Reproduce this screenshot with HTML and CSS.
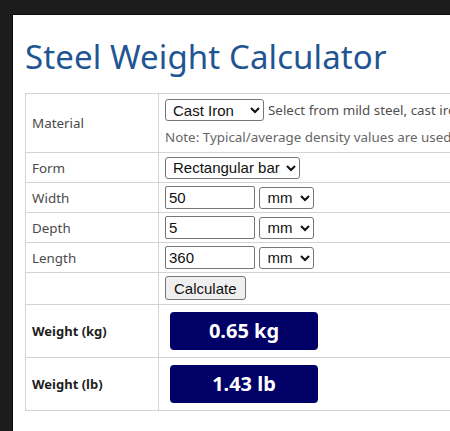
FILE: index.html
```html
<!DOCTYPE html>
<html lang="en">
<head>
  <meta charset="UTF-8" />
  <title>Steel Weight Calculator</title>
  <link rel="stylesheet" href="styles.css">
</head>
<body>
  <div class="page">
    <h1>Steel Weight Calculator</h1>

    <table class="calc">
      <colgroup>
        <col class="col-label">
        <col class="col-field">
      </colgroup>
      <tr>
        <td class="label">Material</td>
        <td class="field">
          <div class="line">
            <select class="sel-material">
              <option>Cast Iron</option>
            </select>
            <span class="hint">Select from mild steel, cast iron, stainless steel, aluminium, brass or copper.</span>
          </div>
          <p class="note">Note: Typical/average density values are used in the calculation.</p>
        </td>
      </tr>
      <tr>
        <td class="label">Form</td>
        <td class="field">
          <select class="sel-form">
            <option>Rectangular bar</option>
          </select>
        </td>
      </tr>
      <tr>
        <td class="label">Width</td>
        <td class="field">
          <input type="text" value="50">
          <select class="sel-unit"><option>mm</option></select>
        </td>
      </tr>
      <tr>
        <td class="label">Depth</td>
        <td class="field">
          <input type="text" value="5">
          <select class="sel-unit"><option>mm</option></select>
        </td>
      </tr>
      <tr>
        <td class="label">Length</td>
        <td class="field">
          <input type="text" value="360">
          <select class="sel-unit"><option>mm</option></select>
        </td>
      </tr>
      <tr>
        <td class="label"></td>
        <td class="field">
          <button type="button">Calculate</button>
        </td>
      </tr>
      <tr class="result-row">
        <td class="label strong">Weight (kg)</td>
        <td class="field">
          <div class="result">0.65 kg</div>
        </td>
      </tr>
      <tr class="result-row">
        <td class="label strong">Weight (lb)</td>
        <td class="field">
          <div class="result">1.43 lb</div>
        </td>
      </tr>
    </table>
  </div>
</body>
</html>
```

FILE: styles.css
```css
* {
  box-sizing: border-box;
}

html, body {
  margin: 0;
  padding: 0;
  overflow: hidden;
}

body {
  background: #1c1c1c;
  padding: 14px 0 0 12px;
  font-family: 'Noto Sans', 'Open Sans', sans-serif;
}

.page {
  width: 700px;
  height: 460px;
  background: #fff;
  border-left: 1px solid #0b0b0b;
  border-top: 1px solid #0b0b0b;
  padding: 20px 12px;
}

h1 {
  margin: 0 0 14px;
  font-weight: 400;
  font-size: 33px;
  line-height: 44px;
  color: #1f5592;
  letter-spacing: 0.1px;
}

.calc {
  border-collapse: collapse;
  table-layout: fixed;
  width: 640px;
}

.col-label {
  width: 133px;
}

.calc td {
  border: 1px solid #d3d3d3;
  padding: 3px 6px;
  font-size: 13.4px;
  color: #4a4a4a;
  vertical-align: middle;
  height: 30px;
  overflow: hidden;
}

.calc td.strong {
  font-weight: 700;
  font-size: 13px;
  color: #1e1e1e;
  white-space: nowrap;
}

.line {
  display: flex;
  align-items: center;
  gap: 4px;
  white-space: nowrap;
  margin-top: 2px;
}

.hint {
  color: #505050;
}

.note {
  margin: 7px 0 3px;
  color: #666;
  white-space: nowrap;
}

select, input, button {
  font-family: 'Liberation Sans', Arial, sans-serif;
  font-size: 15px;
  color: #111;
  vertical-align: middle;
}

select {
  height: 22px;
  border: 1px solid #767676;
  border-radius: 3px;
  background: #fff;
  padding: 0 0 0 3px;
}

.sel-material {
  width: 99px;
  flex: none;
}

.sel-form {
  width: 135px;
}

.sel-unit {
  width: 55px;
  margin-left: 1px;
}

input {
  width: 90px;
  height: 23px;
  border: 1px solid #767676;
  border-radius: 2px;
  padding: 1px 3px;
}

button {
  height: 24px;
  padding: 0 8px;
  border: 1px solid #767676;
  border-radius: 3px;
  background: #efefef;
  margin-bottom: 1px;
}

.result-row td {
  height: 53px;
}

.result {
  width: 148px;
  height: 38px;
  margin-left: 5px;
  background: #000066;
  color: #fff;
  border-radius: 4px;
  font-weight: 700;
  font-size: 20px;
  line-height: 38px;
  text-align: center;
}
```
